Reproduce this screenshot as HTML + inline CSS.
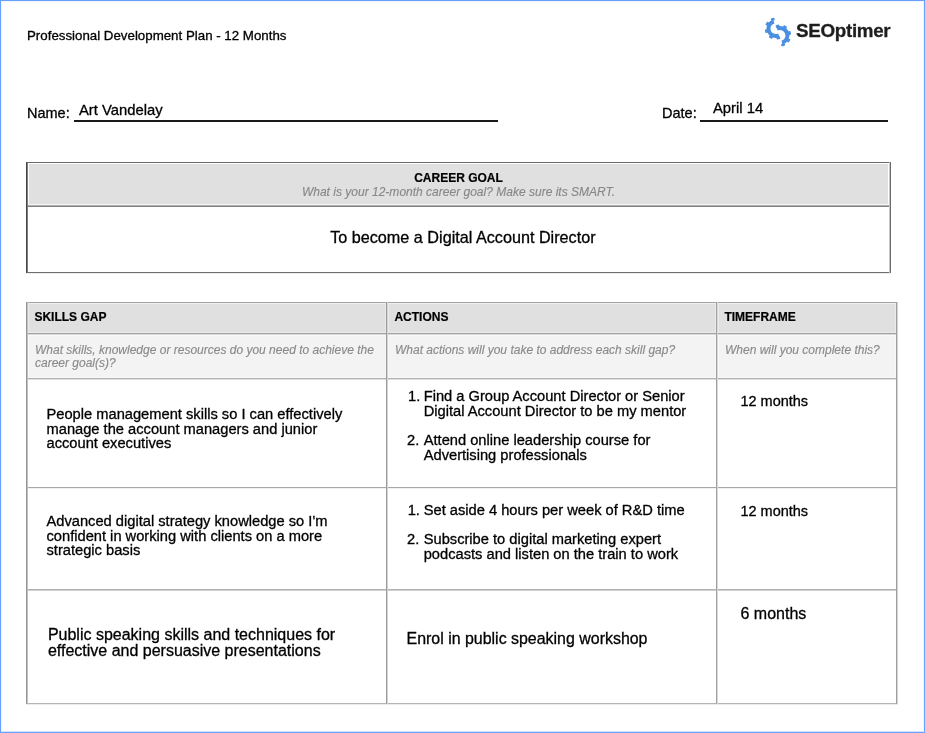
<!DOCTYPE html>
<html lang="en">
<head>
<meta charset="utf-8">
<title>Professional Development Plan - 12 Months</title>
<style>
*{box-sizing:border-box;margin:0;padding:0}
html,body{width:925px;height:733px;overflow:hidden;background:#fff}
body{position:relative;font-family:"Liberation Sans",Arial,Helvetica,sans-serif;color:#000}
.page{position:absolute;left:0;top:0;width:925px;height:733px;overflow:hidden;will-change:transform}
.frame{position:absolute;left:0;top:0;width:925px;height:733px;border:1px solid #6aa0fe;z-index:10}
.abs,.c{position:absolute;white-space:nowrap}
.title{left:27px;top:28px;font-size:13.3px;line-height:15px}
.lbl{font-size:14.5px;line-height:16px}
.val{font-size:14.8px;line-height:16px}
.b{position:absolute}
.logo{position:absolute;left:760px;top:12px}
.logotxt{position:absolute;left:796px;top:19px;font-size:18.8px;line-height:24px;font-weight:bold;letter-spacing:-0.3px;color:#1e1e1e;white-space:nowrap;-webkit-text-stroke:0.3px #1e1e1e}
.gh{position:absolute;left:29px;top:164px;width:859px;height:40px;background:#e0e0e0;text-align:center}
.gh b{display:block;font-size:12px;line-height:14px;margin-top:6.7px}
.gh i{display:block;font-size:12.03px;line-height:14px;color:#888;margin-top:0.3px;-webkit-text-stroke:0.15px #888}
.gh b,.h{-webkit-text-stroke:0.2px #000}
.gb{position:absolute;left:30.4px;width:865px;top:227.5px;text-align:center;font-size:16.2px;line-height:18px}
.h{position:absolute;top:304px;height:28px;background:#e0e0e0;font-weight:bold;font-size:12px;line-height:14px;padding:5.6px 0 0 5.4px}
.s{position:absolute;top:336px;height:41px;background:#f3f3f3;font-style:italic;font-size:12px;line-height:13.1px;color:#8a8a8a;padding:7.9px 0 0 6px;white-space:nowrap;-webkit-text-stroke:0.15px #8a8a8a}
.t{font-size:14.68px;line-height:14.7px}
.u{font-size:16px;line-height:15.6px}
.title,.lbl,.val,.t,.u,.gb{-webkit-text-stroke:0.3px #000}
</style>
</head>
<body>
<div class="page">
<div class="abs title">Professional Development Plan - 12 Months</div>
<svg class="logo" width="40" height="44" viewBox="0 0 40 44"><path d="M13.88 9.45 A7.40 7.40 0 1 0 18.93 23.31" fill="none" stroke="#4a8fe2" stroke-width="4.00"/><rect x="13.95" y="5.60" width="3.7" height="2.40" rx="0.5" fill="#4a8fe2" transform="rotate(-18.0 15.8 16.6)"/><rect x="13.95" y="5.60" width="3.7" height="2.40" rx="0.5" fill="#4a8fe2" transform="rotate(-60.0 15.8 16.6)"/><rect x="13.95" y="5.60" width="3.7" height="2.40" rx="0.5" fill="#4a8fe2" transform="rotate(-105.0 15.8 16.6)"/><rect x="13.95" y="5.60" width="3.7" height="2.40" rx="0.5" fill="#4a8fe2" transform="rotate(-150.0 15.8 16.6)"/><rect x="13.95" y="5.60" width="3.7" height="2.40" rx="0.5" fill="#4a8fe2" transform="rotate(-195.0 15.8 16.6)"/><path d="M22.02 30.65 A7.40 7.40 0 1 0 16.97 16.79" fill="none" stroke="#4a8fe2" stroke-width="4.00"/><rect x="18.25" y="12.50" width="3.7" height="2.40" rx="0.5" fill="#4a8fe2" transform="rotate(-198.0 20.1 23.5)"/><rect x="18.25" y="12.50" width="3.7" height="2.40" rx="0.5" fill="#4a8fe2" transform="rotate(-240.0 20.1 23.5)"/><rect x="18.25" y="12.50" width="3.7" height="2.40" rx="0.5" fill="#4a8fe2" transform="rotate(-285.0 20.1 23.5)"/><rect x="18.25" y="12.50" width="3.7" height="2.40" rx="0.5" fill="#4a8fe2" transform="rotate(-330.0 20.1 23.5)"/><rect x="18.25" y="12.50" width="3.7" height="2.40" rx="0.5" fill="#4a8fe2" transform="rotate(-375.0 20.1 23.5)"/></svg>
<div class="logotxt">SEOptimer</div>

<div class="abs lbl" style="left:27px;top:104.9px">Name:</div>
<div class="abs val" style="left:79px;top:102px">Art Vandelay</div>
<div class="b" style="left:74px;top:120px;width:424px;height:2px;background:#1a1a1a"></div>
<div class="abs lbl" style="left:662px;top:105px">Date:</div>
<div class="abs val" style="left:713px;top:100px">April 14</div>
<div class="b" style="left:700px;top:120px;width:188px;height:2px;background:#1a1a1a"></div>

<!-- career goal box -->
<div class="b" style="left:26px;top:162px;width:865px;height:1px;background:#686868"></div>
<div class="b" style="left:26px;top:272px;width:865px;height:1px;background:#6e6e6e"></div>
<div class="b" style="left:26px;top:273px;width:865px;height:1px;background:#ececec"></div>
<div class="b" style="left:26px;top:162px;width:1px;height:111px;background:#464646"></div>
<div class="b" style="left:27px;top:162px;width:1px;height:111px;background:#7c7c7c"></div>
<div class="b" style="left:889px;top:162px;width:1px;height:111px;background:#c6c6c6"></div>
<div class="b" style="left:890px;top:162px;width:1px;height:111px;background:#6a6a6a"></div>
<div class="gh"><b>CAREER GOAL</b><i>What is your 12-month career goal? Make sure its SMART.</i></div>
<div class="b" style="left:28px;top:204px;width:861px;height:1px;background:#f6f6f6"></div>
<div class="b" style="left:28px;top:205px;width:861px;height:1px;background:#b0b0b0"></div>
<div class="b" style="left:28px;top:206px;width:861px;height:1px;background:#808080"></div>
<div class="gb">To become a Digital Account Director</div>

<!-- skills table -->
<div class="b" style="left:28px;top:303px;width:868px;height:30px;background:#ebebeb"></div>
<div class="b" style="left:28px;top:335px;width:868px;height:43px;background:#f8f8f8"></div>
<div class="h" style="left:29px;width:356px">SKILLS GAP</div>
<div class="h" style="left:389px;width:326px">ACTIONS</div>
<div class="h" style="left:719px;width:176px">TIMEFRAME</div>
<div class="s" style="left:29px;width:356px">What skills, knowledge or resources do you need to achieve the<br>career goal(s)?</div>
<div class="s" style="left:389px;width:326px">What actions will you take to address each skill gap?</div>
<div class="s" style="left:719px;width:176px">When will you complete this?</div>
<div class="b" style="left:26px;top:302px;width:872px;height:1px;background:#a3a3a3"></div>
<div class="b" style="left:26px;top:303px;width:872px;height:1px;background:#f0f0f0"></div>
<div class="b" style="left:26px;top:333px;width:872px;height:1px;background:#a0a0a0"></div>
<div class="b" style="left:26px;top:334px;width:872px;height:1px;background:#dadada"></div>
<div class="b" style="left:26px;top:378px;width:872px;height:1px;background:#b0b0b0"></div>
<div class="b" style="left:26px;top:379px;width:872px;height:1px;background:#e0e0e0"></div>
<div class="b" style="left:26px;top:487px;width:872px;height:1px;background:#a8a8a8"></div>
<div class="b" style="left:26px;top:488px;width:872px;height:1px;background:#f0f0f0"></div>
<div class="b" style="left:26px;top:589px;width:872px;height:1px;background:#b4b4b4"></div>
<div class="b" style="left:26px;top:590px;width:872px;height:1px;background:#cecece"></div>
<div class="b" style="left:26px;top:703px;width:872px;height:1px;background:#b4b4b4"></div>
<div class="b" style="left:26px;top:704px;width:872px;height:1px;background:#ebebeb"></div>
<div class="b" style="left:26px;top:302px;width:1px;height:402px;background:#959595"></div>
<div class="b" style="left:27px;top:302px;width:1px;height:402px;background:#c0c0c0"></div>
<div class="b" style="left:386px;top:302px;width:1px;height:402px;background:#9a9a9a"></div>
<div class="b" style="left:387px;top:302px;width:1px;height:402px;background:#d4d4d4"></div>
<div class="b" style="left:716px;top:302px;width:1px;height:402px;background:#a0a0a0"></div>
<div class="b" style="left:717px;top:302px;width:1px;height:402px;background:#dadada"></div>
<div class="b" style="left:896px;top:302px;width:1px;height:402px;background:#a0a0a0"></div>
<div class="b" style="left:897px;top:302px;width:1px;height:402px;background:#d2d2d2"></div>

<div class="c t" style="left:46.5px;top:407px">People management skills so I can effectively<br>manage the account managers and junior<br>account executives</div>
<div class="c t" style="left:408px;top:388.8px">1.</div>
<div class="c t" style="left:423.7px;top:388.8px">Find a Group Account Director or Senior<br>Digital Account Director to be my mentor</div>
<div class="c t" style="left:407px;top:432.8px">2.</div>
<div class="c t" style="left:423.7px;top:432.8px">Attend online leadership course for<br>Advertising professionals</div>
<div class="c t" style="left:740.4px;top:393.8px;font-size:14.5px">12 months</div>

<div class="c t" style="left:46.5px;top:514px">Advanced digital strategy knowledge so I'm<br>confident in working with clients on a more<br>strategic basis</div>
<div class="c t" style="left:407.7px;top:503px">1.</div>
<div class="c t" style="left:423.7px;top:503px">Set aside 4 hours per week of R&amp;D time</div>
<div class="c t" style="left:407px;top:532px">2.</div>
<div class="c t" style="left:423.7px;top:532px">Subscribe to digital marketing expert<br>podcasts and listen on the train to work</div>
<div class="c t" style="left:740.4px;top:503.8px;font-size:14.5px">12 months</div>

<div class="c u" style="left:47.9px;top:627.2px">Public speaking skills and techniques for<br>effective and persuasive presentations</div>
<div class="c u" style="left:406.5px;top:630.8px;font-size:15.95px">Enrol in public speaking workshop</div>
<div class="c u" style="left:740.5px;top:605.7px">6 months</div>
</div>
<div class="frame"></div>
<div class="b" style="left:1px;top:1px;width:1px;height:731px;background:#ecf3ff"></div>
<div class="b" style="left:1px;top:731px;width:923px;height:1px;background:#d2e1fe"></div>
<div class="b" style="left:1px;top:1px;width:923px;height:1px;background:#eef4ff"></div>
<div class="b" style="left:923px;top:1px;width:1px;height:731px;background:#edf3ff"></div>
</body>
</html>
